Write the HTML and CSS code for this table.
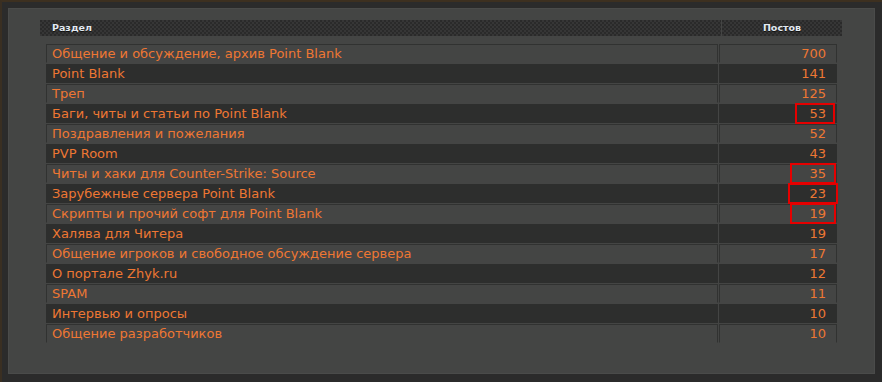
FILE: index.html
```html
<!DOCTYPE html>
<html>
<head>
  <meta charset="utf-8">
  <link rel="stylesheet" href="styles.css">
</head>
<body>
  <div class="panel">
    <!-- Column titles -->
    <div class="stats-head">
      <div class="head-cell head-title">Раздел</div>
      <div class="head-cell head-count">Постов</div>
    </div>

    <table class="stats">
      <tr><td class="forum">Общение и обсуждение, архив Point Blank</td><td class="count">700</td></tr>
      <tr class="alt"><td class="forum">Point Blank</td><td class="count">141</td></tr>
      <tr><td class="forum">Треп</td><td class="count">125</td></tr>
      <tr class="alt"><td class="forum">Баги, читы и статьи по Point Blank</td><td class="count"><span class="mark mark-narrow"></span>53</td></tr>
      <tr><td class="forum">Поздравления и пожелания</td><td class="count">52</td></tr>
      <tr class="alt"><td class="forum">PVP Room</td><td class="count">43</td></tr>
      <tr><td class="forum">Читы и хаки для Counter-Strike: Source</td><td class="count"><span class="mark"></span>35</td></tr>
      <tr class="alt"><td class="forum">Зарубежные сервера Point Blank</td><td class="count"><span class="mark mark-wide"></span>23</td></tr>
      <tr><td class="forum">Скрипты и прочий софт для Point Blank</td><td class="count"><span class="mark"></span>19</td></tr>
      <tr class="alt"><td class="forum">Халява для Читера</td><td class="count">19</td></tr>
      <tr><td class="forum">Общение игроков и свободное обсуждение сервера</td><td class="count">17</td></tr>
      <tr class="alt"><td class="forum">О портале Zhyk.ru</td><td class="count">12</td></tr>
      <tr><td class="forum">SPAM</td><td class="count">11</td></tr>
      <tr class="alt"><td class="forum">Интервью и опросы</td><td class="count">10</td></tr>
      <tr><td class="forum">Общение разработчиков</td><td class="count">10</td></tr>
    </table>
  </div>
</body>
</html>
```

FILE: styles.css
```css
body {
  margin: 0;
  padding: 6px 7px 8px 6px;
  background: #2b2b2b;
  border-top: 2px solid #3d3020;
  border-left: 2px solid #3a2f22;
  font-family: "DejaVu Sans", Verdana, sans-serif;
}

.panel {
  height: 366px;
  box-sizing: border-box;
  background: #444544;
  border: 1px solid #4a4b4a;
  padding: 11px 32px 0 31px;
}

/* Checkered header bar */
.stats-head {
  display: flex;
  gap: 1px;
  width: 802px;
  height: 16px;
}

.head-cell {
  height: 16px;
  line-height: 16px;
  font-size: 9.5px;
  font-weight: bold;
  color: #e2e9f2;
  text-shadow: 0 1px 0 #111;
  background-color: #2a2a2a;
  background-image:
    linear-gradient(45deg, #363636 25%, transparent 25%, transparent 75%, #363636 75%),
    linear-gradient(45deg, #363636 25%, transparent 25%, transparent 75%, #363636 75%);
  background-size: 4px 4px;
  background-position: 0 0, 2px 2px;
}

.head-title {
  width: 681px;
  padding-left: 12px;
  box-sizing: border-box;
}

.head-count {
  flex: 1;
  text-align: center;
}

/* Forum list */
.stats {
  border-collapse: separate;
  border-spacing: 1px;
  width: 793px;
  margin: 7px 0 0 5px;
  table-layout: fixed;
}

.stats td {
  height: 19px;
  box-sizing: border-box;
  padding: 0;
  border: 1px solid #313231;
  border-bottom-color: #444544;
  font-size: 13px;
  color: #ee7733;
  white-space: nowrap;
}

.stats tr.alt td {
  background: #2d2e2d;
  border-color: #2d2e2d;
}

.forum {
  width: 672px;
  padding-left: 5px !important;
}

.count {
  width: 118px;
  text-align: right;
  padding-right: 10px !important;
  position: relative;
}

/* Red highlight frames over some counts */
.mark {
  position: absolute;
  top: -2px;
  bottom: -2px;
  right: 0;
  width: 46px;
  border: 2px solid #e50000;
  box-sizing: border-box;
}

.mark-narrow {
  width: 40px;
  right: 1px;
}

.mark-wide {
  width: 50px;
  right: -2px;
}
```
